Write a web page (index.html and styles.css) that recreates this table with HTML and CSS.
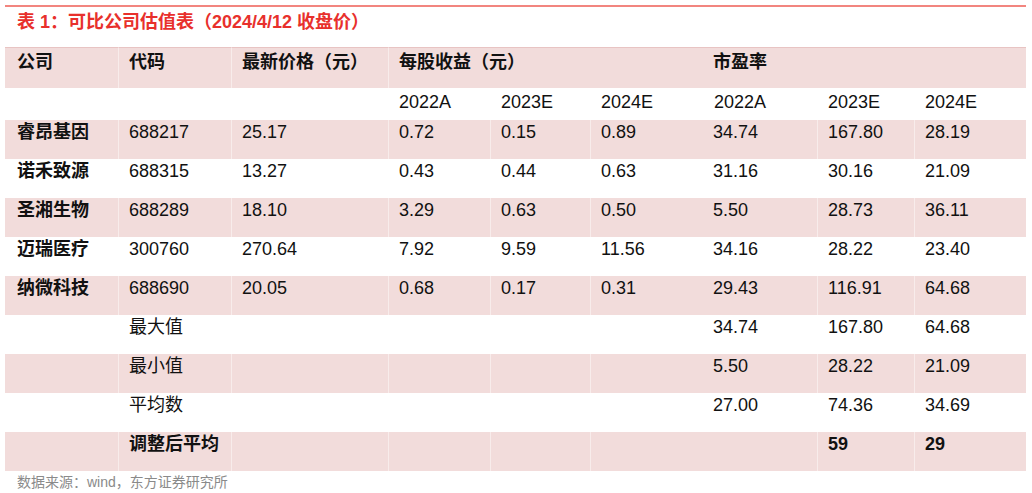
FILE: index.html
```html
<!DOCTYPE html>
<html lang="zh">
<head>
<meta charset="utf-8">
<link rel="stylesheet" href="styles.css">
</head>
<body>
<div class="page">
  <div class="rule"></div>
  <h1 class="title">表 1：可比公司估值表（2024/4/12 收盘价）</h1>
  <table class="val">
    <colgroup>
      <col class="c1"><col class="c2"><col class="c3"><col class="c4"><col class="c5"><col class="c6"><col class="c7"><col class="c8"><col class="c9">
    </colgroup>
    <tr class="pink head1">
      <td>公司</td><td>代码</td><td>最新价格（元）</td><td colspan="3">每股收益（元）</td><td colspan="3">市盈率</td>
    </tr>
    <tr class="head2">
      <td></td><td></td><td></td><td>2022A</td><td>2023E</td><td>2024E</td><td>2022A</td><td>2023E</td><td>2024E</td>
    </tr>
    <tr class="pink data">
      <td class="name">睿昂基因</td><td>688217</td><td>25.17</td><td>0.72</td><td>0.15</td><td>0.89</td><td>34.74</td><td>167.80</td><td>28.19</td>
    </tr>
    <tr class="data">
      <td class="name">诺禾致源</td><td>688315</td><td>13.27</td><td>0.43</td><td>0.44</td><td>0.63</td><td>31.16</td><td>30.16</td><td>21.09</td>
    </tr>
    <tr class="pink data">
      <td class="name">圣湘生物</td><td>688289</td><td>18.10</td><td>3.29</td><td>0.63</td><td>0.50</td><td>5.50</td><td>28.73</td><td>36.11</td>
    </tr>
    <tr class="data">
      <td class="name">迈瑞医疗</td><td>300760</td><td>270.64</td><td>7.92</td><td>9.59</td><td>11.56</td><td>34.16</td><td>28.22</td><td>23.40</td>
    </tr>
    <tr class="pink data">
      <td class="name">纳微科技</td><td>688690</td><td>20.05</td><td>0.68</td><td>0.17</td><td>0.31</td><td>29.43</td><td>116.91</td><td>64.68</td>
    </tr>
    <tr class="data">
      <td></td><td>最大值</td><td></td><td></td><td></td><td></td><td>34.74</td><td>167.80</td><td>64.68</td>
    </tr>
    <tr class="pink data">
      <td></td><td>最小值</td><td></td><td></td><td></td><td></td><td>5.50</td><td>28.22</td><td>21.09</td>
    </tr>
    <tr class="data">
      <td></td><td>平均数</td><td></td><td></td><td></td><td></td><td>27.00</td><td>74.36</td><td>34.69</td>
    </tr>
    <tr class="pink data">
      <td></td><td class="strong">调整后平均</td><td></td><td></td><td></td><td></td><td></td><td class="strong">59</td><td class="strong">29</td>
    </tr>
  </table>
  <p class="source">数据来源：wind，东方证券研究所</p>
</div>
</body>
</html>
```
FILE: styles.css
```css
html, body {
  margin: 0;
  padding: 0;
  background: #ffffff;
}

body {
  font-family: "Liberation Sans", "Noto Sans CJK SC", sans-serif;
  color: #111111;
}

.page {
  padding: 0 6px 0 5px;
  width: 1021px;
}

.rule {
  margin-top: 5px;
  height: 2px;
  background: #f2857f;
}

.title {
  margin: 0;
  padding: 3px 12px 0 12px;
  font-size: 18px;
  line-height: 24px;
  font-weight: bold;
  color: #e8302c;
}

.val {
  margin-top: 13px;
  width: 1021px;
  table-layout: fixed;
  border-collapse: separate;
  border-spacing: 0;
  font-size: 18px;
  line-height: 22px;
}

.c1 { width: 113px; }
.c2 { width: 113px; }
.c3 { width: 157px; }
.c4 { width: 102px; }
.c5 { width: 100px; }
.c6 { width: 113px; }
.c7 { width: 114px; }
.c8 { width: 97px; }
.c9 { width: 112px; }

.val td {
  padding: 1px 0 0 10px;
  vertical-align: top;
  white-space: nowrap;
  border-left: 1px solid rgba(255, 255, 255, 0.45);
}

.val td:first-child {
  border-left: none;
  padding-left: 12px;
}

.pink td {
  background: #f2dcdb;
}

.head1 td {
  height: 37px;
  padding-top: 3px;
  font-weight: bold;
  border-top: 1px solid #e8c4c3;
}

.head1 td:nth-child(5) {
  border-left: none;
}

.head2 td {
  height: 29px;
  padding-top: 3px;
}

.data td {
  height: 38px;
}

.data td:nth-child(7) {
  border-left: none;
}

.name,
.strong {
  font-weight: bold;
}

.source {
  margin: 0;
  padding: 2px 12px 0 12px;
  font-size: 14px;
  line-height: 18px;
  color: #8a8a8a;
}
```
